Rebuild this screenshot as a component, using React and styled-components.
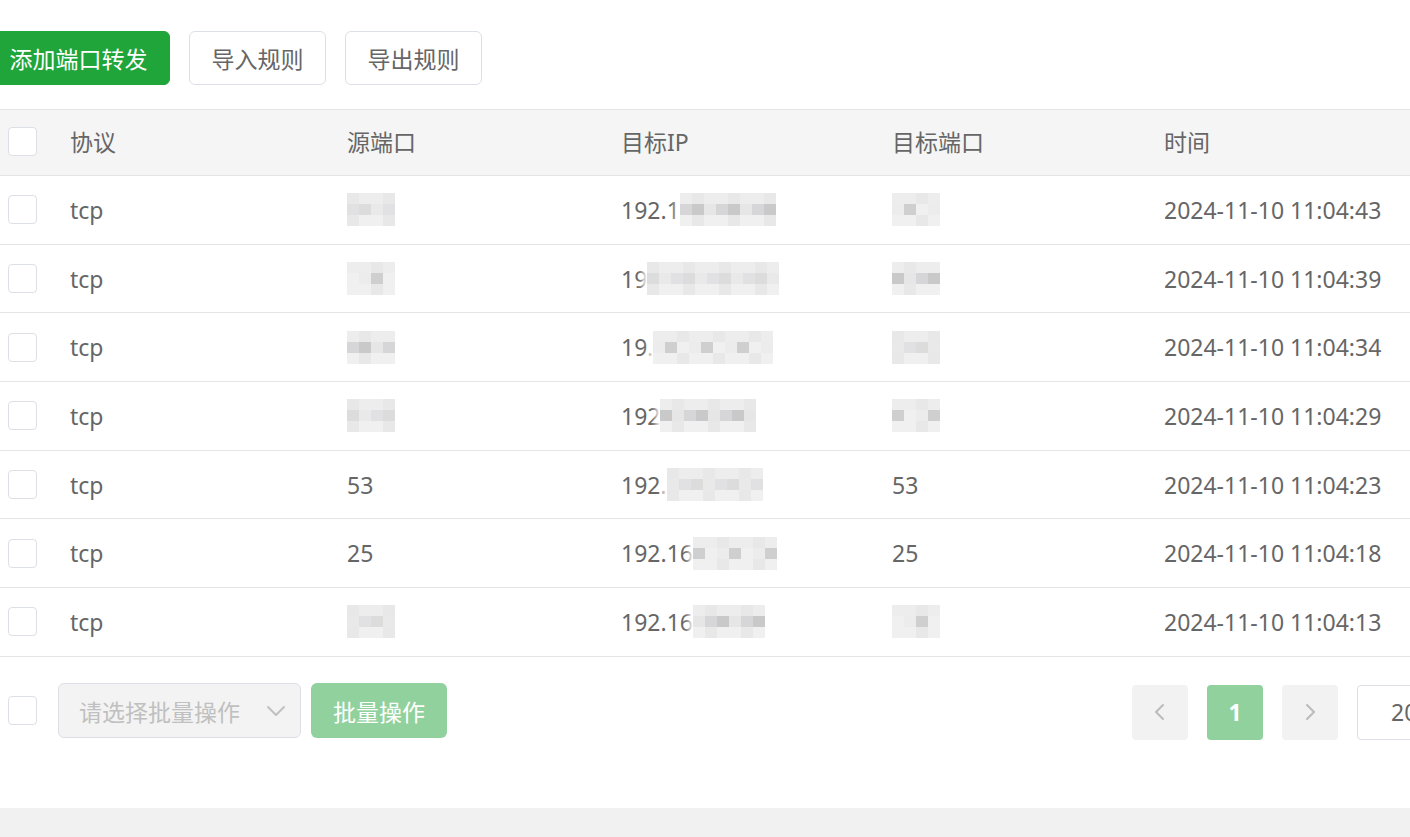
import React from "react";
import styled, { createGlobalStyle } from "styled-components";

const Global = createGlobalStyle`
  html, body { margin: 0; padding: 0; background: #fff; }
  body { font-family: "Noto Sans", "Noto Sans CJK SC", sans-serif; color: #666; overflow: hidden; }
`;

const Page = styled.div`
  width: 1410px;
  height: 837px;
  display: flex;
  flex-direction: column;
  overflow: hidden;
`;

const Main = styled.div`
  flex: 1;
  padding-top: 31px;
`;

const Toolbar = styled.div`
  display: flex;
  gap: 19px;
  margin-left: -13px;
  margin-bottom: 24px;
`;

const Button = styled.button`
  height: 54px;
  padding: 0 21.5px;
  border-radius: 6px;
  font-family: inherit;
  font-size: 23px;
  cursor: pointer;
  border: 1px solid ${p => (p.$primary ? "#20a53a" : "#dcdfe6")};
  background: ${p => (p.$primary ? "#20a53a" : "#fff")};
  color: ${p => (p.$primary ? "#fff" : "#666")};
`;

const Table = styled.div`
  width: 1430px;
  border-top: 1px solid #e4e4e4;
`;

const Row = styled.div`
  display: grid;
  grid-template-columns: 70px 277px 274px 271px 272px 1fr;
  align-items: center;
  box-sizing: border-box;
  height: ${p => (p.$head ? "66px" : "68.7px")};
  padding-bottom: ${p => (p.$head ? "3px" : "0")};
  background: ${p => (p.$head ? "#f5f5f5" : "#fff")};
  border-bottom: 1px solid #e4e4e4;
  font-size: 23px;
  color: #666;
`;

const Cell = styled.div`
  display: flex;
  align-items: center;
  white-space: nowrap;
`;

const Check = styled.span`
  display: inline-block;
  width: 29px;
  height: 29px;
  margin-left: 8px;
  border: 1px solid #dcdfe6;
  border-radius: 4px;
  background: #fff;
  box-sizing: border-box;
`;

const Mosaic = styled.span`
  display: inline-grid;
  grid-template-columns: repeat(${p => p.$cols}, 12px);
  grid-auto-rows: 11px;
  box-shadow: 0 0 6px 4px #fff;
`;

const Px = styled.span`
  background: ${p => p.$c};
`;

const shades = ["#ececec", "#e6e6e6", "#dcdcdc", "#cfcfcf", "#d6d6d8", "#e9e9e9", "#f0f0f0", "#c9c9c9", "#e1e1e3"];

function Blur({ cols, seed = 0 }) {
  const cells = [];
  for (let r = 0; r < 3; r++) {
    for (let c = 0; c < cols; c++) {
      const idx = (c * 3 + r * 5 + seed * 7) % shades.length;
      const base = r === 1 ? shades[(idx + 3) % shades.length] : r === 0 ? "#ededed" : "#f0f0f0";
      cells.push(<Px key={r + "-" + c} $c={r === 1 ? base : (c + seed) % 3 === 0 ? "#e8e8e8" : base} />);
    }
  }
  return <Mosaic $cols={cols}>{cells}</Mosaic>;
}

const rows = [
  { src: null, ip: "192.1", ipCols: 8, dst: null, t: "2024-11-10 11:04:43" },
  { src: null, ip: "19", ipCols: 11, dst: null, t: "2024-11-10 11:04:39" },
  { src: null, ip: "19.", ipCols: 10, dst: null, t: "2024-11-10 11:04:34" },
  { src: null, ip: "192", ipCols: 8, dst: null, t: "2024-11-10 11:04:29" },
  { src: "53", ip: "192.", ipCols: 8, dst: "53", t: "2024-11-10 11:04:23" },
  { src: "25", ip: "192.16", ipCols: 7, dst: "25", t: "2024-11-10 11:04:18" },
  { src: null, ip: "192.16", ipCols: 6, dst: null, t: "2024-11-10 11:04:13" },
];

const Footer = styled.div`
  display: flex;
  align-items: center;
  justify-content: space-between;
  padding-top: 25px;
  width: 1482px;
`;

const FooterLeft = styled.div`
  display: flex;
  align-items: center;
  gap: 10px;
`;

const Select = styled.div`
  width: 243px;
  height: 55px;
  margin-left: 11px;
  box-sizing: border-box;
  border: 1px solid #dcdfe6;
  border-radius: 6px;
  background: #f3f3f3;
  display: flex;
  align-items: center;
  justify-content: space-between;
  padding: 0 12px 0 20px;
  font-size: 23px;
  color: #c0c0c0;
`;

const BatchButton = styled.button`
  height: 55px;
  padding: 0 22px;
  border: none;
  border-radius: 6px;
  background: #90d19d;
  color: #fff;
  font-family: inherit;
  font-size: 23px;
`;

const Pager = styled.div`
  display: flex;
  align-items: center;
  gap: 19px;
  margin-top: 3px;
`;

const PageBtn = styled.div`
  width: 56px;
  height: 55px;
  border-radius: 4px;
  display: flex;
  align-items: center;
  justify-content: center;
  background: ${p => (p.$active ? "#90d19d" : "#f2f2f2")};
  color: ${p => (p.$active ? "#fff" : "#bbb")};
  font-size: 23px;
  font-weight: 700;
`;

const SizeBox = styled.div`
  width: 90px;
  height: 53px;
  border: 1px solid #dcdfe6;
  border-radius: 4px;
  display: flex;
  align-items: center;
  padding-left: 33px;
  font-size: 23px;
  color: #666;
`;

const BottomBar = styled.div`
  height: 29px;
  background: #f1f1f1;
  flex-shrink: 0;
`;

const Chevron = ({ dir, color = "#bbb", size = 24 }) => (
  <svg width={size} height={size} viewBox="0 0 24 24" fill="none" stroke={color} strokeWidth="2" strokeLinecap="round" strokeLinejoin="round">
    {dir === "left" && <path d="M15 5l-7 7 7 7" />}
    {dir === "right" && <path d="M9 5l7 7-7 7" />}
    {dir === "down" && <path d="M4 8l8 8 8-8" />}
  </svg>
);

export default function App() {
  return (
    <Page>
      <Global />
      <Main>
        <Toolbar>
          <Button $primary>添加端口转发</Button>
          <Button>导入规则</Button>
          <Button>导出规则</Button>
        </Toolbar>
        <Table>
          <Row $head>
            <Cell><Check /></Cell>
            <Cell>协议</Cell>
            <Cell>源端口</Cell>
            <Cell>目标IP</Cell>
            <Cell>目标端口</Cell>
            <Cell>时间</Cell>
          </Row>
          {rows.map((r, i) => (
            <Row key={i}>
              <Cell><Check /></Cell>
              <Cell>tcp</Cell>
              <Cell>{r.src ? r.src : <Blur cols={4} seed={i} />}</Cell>
              <Cell>{r.ip}<Blur cols={r.ipCols} seed={i + 2} /></Cell>
              <Cell>{r.dst ? r.dst : <Blur cols={4} seed={i + 4} />}</Cell>
              <Cell>{r.t}</Cell>
            </Row>
          ))}
        </Table>
        <Footer>
          <FooterLeft>
            <Check />
            <Select>
              <span>请选择批量操作</span>
              <Chevron dir="down" color="#c0c0c0" size={24} />
            </Select>
            <BatchButton>批量操作</BatchButton>
          </FooterLeft>
          <Pager>
            <PageBtn><Chevron dir="left" /></PageBtn>
            <PageBtn $active>1</PageBtn>
            <PageBtn><Chevron dir="right" /></PageBtn>
            <SizeBox>20</SizeBox>
          </Pager>
        </Footer>
      </Main>
      <BottomBar />
    </Page>
  );
}
